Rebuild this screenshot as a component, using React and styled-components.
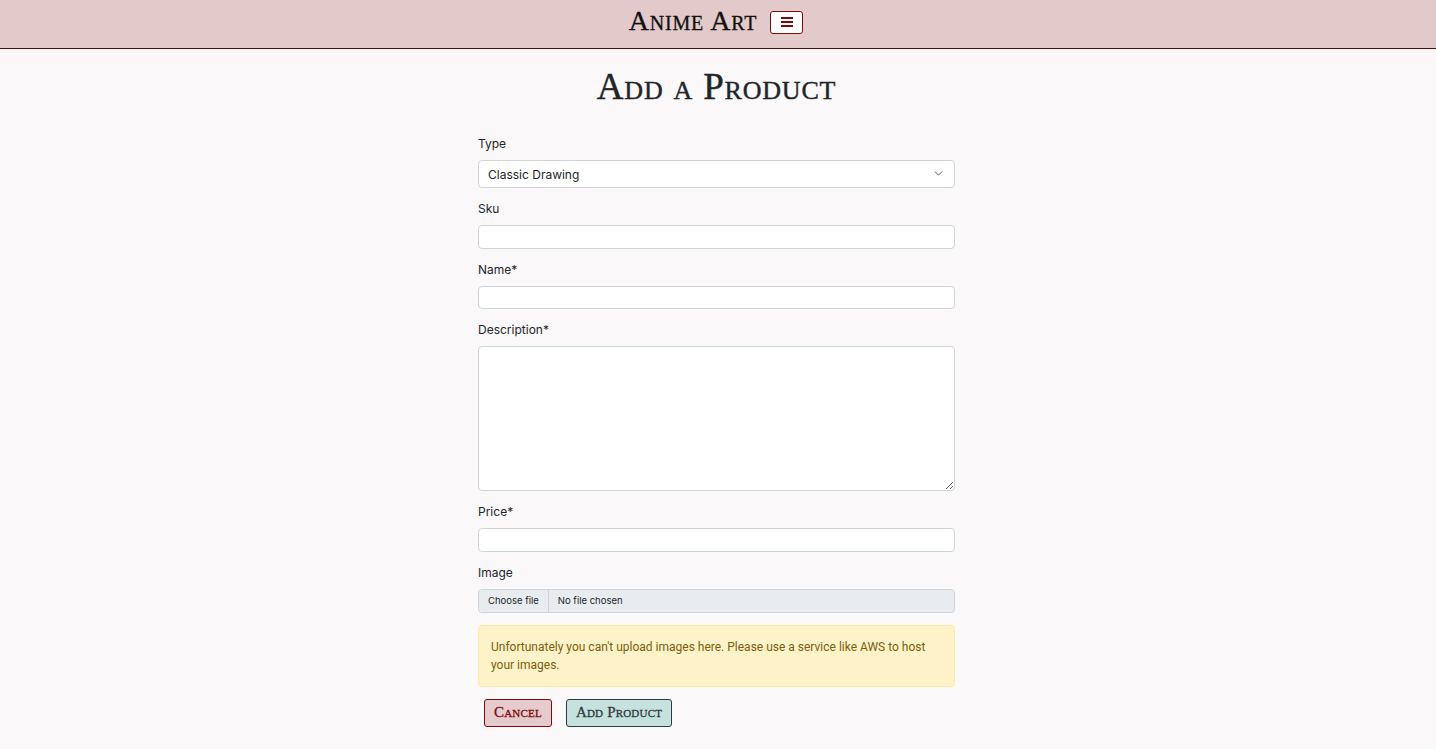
import styled, { createGlobalStyle } from "styled-components";
import { ChevronDown } from "lucide-react";

const GlobalStyle = createGlobalStyle`
  html, body {
    margin: 0;
    padding: 0;
    background: #faf8f9;
    font-family: "Inter", "Roboto", "Liberation Sans", sans-serif;
    color: #212529;
  }
  * { box-sizing: border-box; }
`;

const App = () => {
  return (
    <>
      <GlobalStyle />
      <Navbar>
        <Brand>Anime Art</Brand>
        <Toggler aria-label="menu">
          <Bar />
          <Bar />
          <Bar />
        </Toggler>
      </Navbar>

      <Main>
        <Title>Add a Product</Title>
        <Form onSubmit={(e) => e.preventDefault()}>
          <Field>
            <Label>Type</Label>
            <SelectWrap>
              <Select defaultValue="classic">
                <option value="classic">Classic Drawing</option>
                <option value="digital">Digital Drawing</option>
              </Select>
              <Chevron size={13} strokeWidth={1.6} />
            </SelectWrap>
          </Field>
          <Field>
            <Label>Sku</Label>
            <Input type="text" />
          </Field>
          <Field>
            <Label>Name*</Label>
            <Input type="text" />
          </Field>
          <Field>
            <Label>Description*</Label>
            <TextArea />
          </Field>
          <Field>
            <Label>Price*</Label>
            <Input type="text" />
          </Field>
          <Field>
            <Label>Image</Label>
            <FileBox>
              <FileButton>Choose file</FileButton>
              <FileName>No file chosen</FileName>
              <HiddenInput type="file" />
            </FileBox>
          </Field>
          <Alert>
            Unfortunately you can't upload images here. Please use a service like
            AWS to host your images.
          </Alert>
          <Actions>
            <Button $variant="cancel" type="button">Cancel</Button>
            <Button $variant="add" type="submit">Add Product</Button>
          </Actions>
        </Form>
      </Main>
    </>
  );
};

const Navbar = styled.nav`
  height: 49px;
  background: #e2caca;
  border-bottom: 1px solid #5c0a0a;
  display: flex;
  align-items: center;
  justify-content: center;
  gap: 13px;
  padding-right: 4px;
`;

const Brand = styled.a`
  font-family: "Liberation Serif", serif;
  font-variant: small-caps;
  font-size: 28px;
  font-weight: 400;
  letter-spacing: 0.8px;
  color: #111;
  margin-top: -6px;
  -webkit-text-stroke: 0.3px #111;
`;

const Toggler = styled.button`
  width: 33px;
  height: 23px;
  margin-top: -4px;
  background: #fff;
  border: 1px solid #7a0b0b;
  border-radius: 3px;
  display: flex;
  flex-direction: column;
  align-items: center;
  justify-content: center;
  gap: 2px;
  padding: 0;
`;

const Bar = styled.span`
  width: 12px;
  height: 2px;
  background: #7a0b0b;
`;

const Main = styled.main`
  display: flex;
  flex-direction: column;
  align-items: center;
  padding-top: 20px;
  padding-right: 3px;
`;

const Title = styled.h1`
  font-family: "Liberation Serif", serif;
  font-variant: small-caps;
  font-weight: 400;
  font-size: 37px;
  letter-spacing: 0.8px;
  color: #212529;
  margin: 0 0 30px;
  line-height: 36px;
  -webkit-text-stroke: 0.4px #212529;
`;

const Form = styled.form`
  width: 477px;
  display: flex;
  flex-direction: column;
  gap: 12px;
`;

const Field = styled.div`
  display: flex;
  flex-direction: column;
  gap: 7px;
`;

const Label = styled.label`
  font-size: 12px;
  line-height: 18px;
  color: #212529;
`;

const fieldBase = `
  width: 100%;
  background: #fff;
  border: 1px solid #ced4da;
  border-radius: 4px;
  font-family: "Inter", "Roboto", "Liberation Sans", sans-serif;
  font-size: 12px;
  color: #212529;
  outline: none;
`;

const SelectWrap = styled.div`
  position: relative;
`;

const Select = styled.select`
  ${fieldBase}
  height: 28px;
  padding: 0 30px 0 9px;
  appearance: none;
`;

const Chevron = styled(ChevronDown)`
  position: absolute;
  right: 10px;
  top: 7px;
  color: #343a40;
  pointer-events: none;
`;

const Input = styled.input`
  ${fieldBase}
  height: 23.5px;
  padding: 0 9px;
`;

const TextArea = styled.textarea`
  ${fieldBase}
  height: 145px;
  padding: 6px 9px;
  resize: vertical;
  display: block;
`;

const FileBox = styled.label`
  position: relative;
  display: flex;
  align-items: stretch;
  height: 24px;
  border: 1px solid #ced4da;
  border-radius: 4px;
  background: #e9ecef;
  overflow: hidden;
  font-size: 9.5px;
  color: #212529;
`;

const FileButton = styled.span`
  display: flex;
  align-items: center;
  padding: 0 9px;
  border-right: 1px solid #ced4da;
  background: #e9ecef;
`;

const FileName = styled.span`
  display: flex;
  align-items: center;
  padding: 0 9px;
`;

const HiddenInput = styled.input`
  display: none;
`;

const Alert = styled.div`
  background: #fef3c8;
  border: 1px solid #fdeaa6;
  border-radius: 4px;
  padding: 12px;
  font-family: "Roboto", "Liberation Sans", sans-serif;
  font-size: 12px;
  line-height: 18px;
  color: #7c5d0c;
`;

const Actions = styled.div`
  display: flex;
  gap: 14px;
  padding-left: 6px;
`;

const Button = styled.button`
  height: 28px;
  padding: 0 9px;
  border-radius: 3px;
  font-family: "Liberation Serif", serif;
  font-variant: small-caps;
  font-weight: 400;
  font-size: 15px;
  letter-spacing: 0.2px;
  cursor: pointer;
  -webkit-text-stroke: 0.3px currentColor;
  background: ${(p) => (p.$variant === "cancel" ? "#e5cbcd" : "#c6e2df")};
  color: ${(p) => (p.$variant === "cancel" ? "#7a0b0b" : "#2e3a3f")};
  border: 1px solid ${(p) => (p.$variant === "cancel" ? "#7a0b0b" : "#2e3a3f")};
`;

export default App;
